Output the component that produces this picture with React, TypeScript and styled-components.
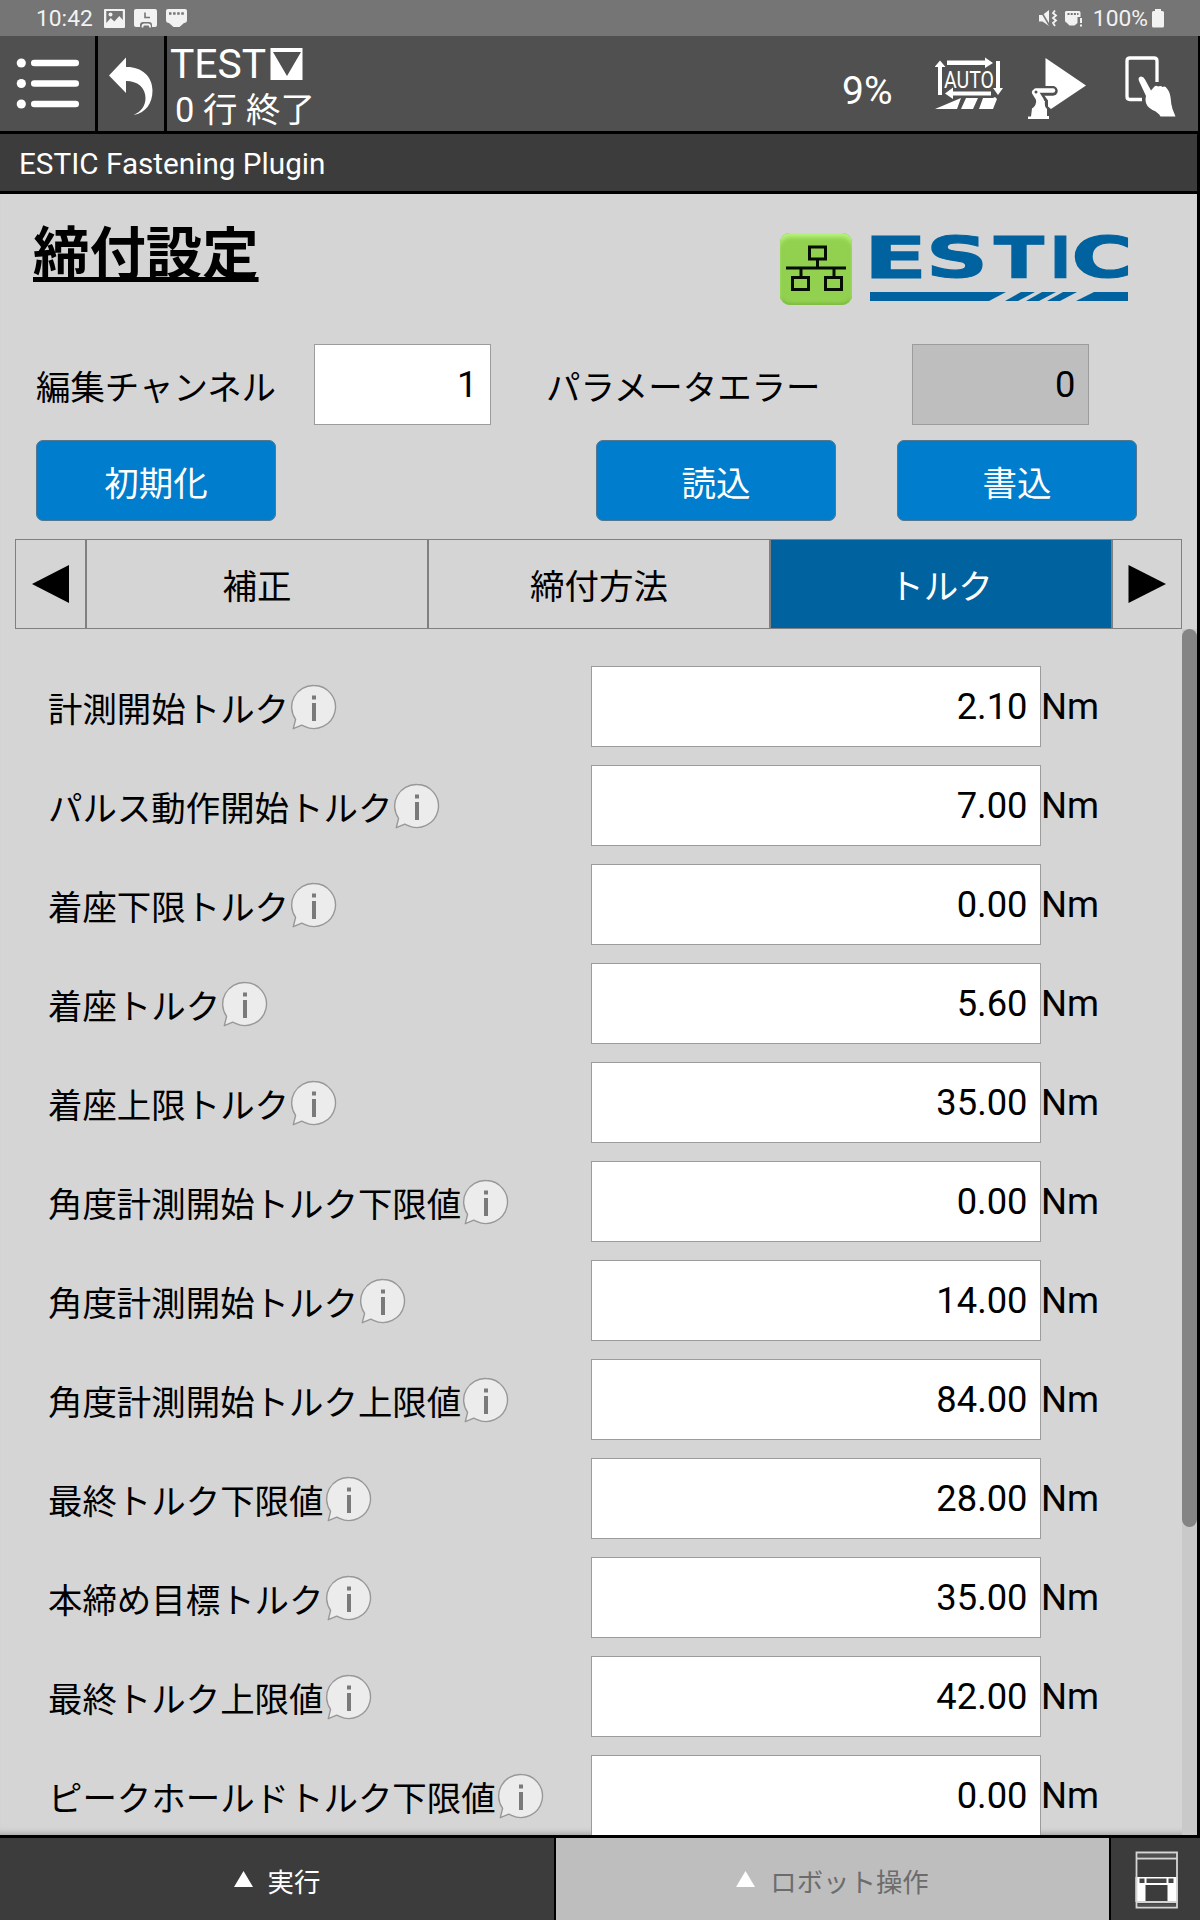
import React from "react";
import styled, { createGlobalStyle } from "styled-components";

const GlobalStyle = createGlobalStyle`
  * { box-sizing: border-box; }
  body { margin: 0; background: #000; }
`;

const roboto = `Roboto, "Noto Sans CJK JP", sans-serif`;
const cjk = `"Noto Sans CJK JP", Roboto, sans-serif`;

const Screen = styled.div`
  width: 1200px;
  height: 1920px;
  overflow: hidden;
  display: flex;
  flex-direction: column;
  background: #000;
  color: #000;
  font-family: ${roboto};
`;

const StatusBar = styled.header`
  height: 36px;
  flex: none;
  display: flex;
  justify-content: space-between;
  align-items: center;
  padding: 2px 36px 0 36px;
  background: #757575;
  color: #f2f2f2;
  font-size: 22.8px;
  line-height: 34px;
`;

const StatusGroup = styled.div<{ $gap: number }>`
  display: flex;
  align-items: center;
  gap: ${(p) => p.$gap}px;
  height: 34px;
  svg { display: block; }
`;

const Battery = styled.span`
  padding-left: 5px;
`;

const Toolbar = styled.div`
  height: 95px;
  flex: none;
  display: flex;
  gap: 3px;
  margin-right: 2px;
  color: #fff;
`;

const ToolCell = styled.div<{ $width?: number }>`
  ${(p) => (p.$width ? `width: ${p.$width}px; flex: none;` : "flex: 1;")}
  display: flex;
  background: #505050;
  svg { display: block; flex: none; }
`;

const Program = styled.div`
  flex: 1;
  padding: 6px 0 0 3px;
`;

const ProgramName = styled.div`
  display: flex;
  align-items: center;
  gap: 4px;
  height: 44px;
  font-size: 40.8px;
  line-height: 44px;
`;

const ProgramState = styled.div`
  height: 44px;
  padding: 1px 0 0 5px;
  font-size: 34.5px;
  line-height: 46px;
`;

const Speed = styled.div`
  width: 93px;
  padding-top: 33px;
  font-size: 39px;
  line-height: 44px;
`;

const PluginBar = styled.div`
  height: 57px;
  flex: none;
  margin: 3px 3px 3px 0;
  padding-left: 19px;
  background: #3b3c3b;
  color: #fff;
  font-size: 29.7px;
  line-height: 59px;
`;

const Content = styled.main`
  height: 1641px;
  flex: none;
  margin-right: 3px;
  display: flex;
  flex-direction: column;
  background: #d5d5d5;
  box-shadow: inset 0 -7px 6px -6px #999;
  overflow: hidden;
  font-family: ${cjk};
`;

const Heading = styled.div`
  height: 150px;
  flex: none;
  display: flex;
  justify-content: space-between;
  align-items: flex-start;
  padding: 0 57px 0 33px;
`;

const Title = styled.h1`
  margin: 15px 0 0;
  font-size: 56.4px;
  line-height: 82px;
  font-weight: 700;
  text-decoration: underline;
  text-decoration-thickness: 5px;
  text-underline-offset: 3px;
  text-decoration-skip-ink: none;
`;

const Brand = styled.div`
  display: flex;
  gap: 10px;
  padding-top: 22px;
  svg { display: block; }
`;

const NetworkBadge = styled.div`
  width: 72px;
  height: 72px;
  margin-top: 17px;
  border-radius: 10px;
  background: #92d050;
  box-shadow: inset 0 4px 4px #b8f57c, inset 0 -2px 3px #7fbd44, inset 2px 0 3px #86c44a, inset -2px 0 3px #86c44a;
`;

const FieldRow = styled.div`
  display: flex;
  align-items: center;
  height: 81px;
  flex: none;
  padding-left: 36px;
`;

const Label = styled.label<{ $width?: number }>`
  ${(p) => (p.$width ? `width: ${p.$width}px;` : "")}
  flex: none;
  font-size: 34.45px;
  line-height: 50px;
  white-space: nowrap;
`;

const ValueBox = styled.div<{ $width: number; $disabled?: boolean; $right?: number }>`
  width: ${(p) => p.$width}px;
  height: 81px;
  flex: none;
  margin-right: ${(p) => p.$right ?? 0}px;
  padding-right: 12.5px;
  border: 1px solid #9c9c9c;
  background: ${(p) => (p.$disabled ? "#bebebe" : "#fff")};
  font-family: ${roboto};
  font-size: 36.3px;
  line-height: 79px;
  text-align: right;
`;

const ButtonRow = styled.div`
  display: flex;
  height: 81px;
  flex: none;
  margin-top: 15px;
  padding-left: 36px;
`;

const Button = styled.button<{ $right?: number }>`
  width: 240px;
  height: 81px;
  padding: 2px 0 0;
  margin-right: ${(p) => p.$right ?? 0}px;
  border: 1px solid #52778f;
  border-radius: 7px;
  background: #007dcc;
  color: #fff;
  font-family: ${cjk};
  font-size: 34.5px;
  line-height: 77px;
`;

const Tabs = styled.nav`
  display: flex;
  height: 90px;
  flex: none;
  width: 1167px;
  margin: 18px 0 0 15px;
`;

const Tab = styled.div<{ $active?: boolean; $width: number }>`
  width: ${(p) => p.$width}px;
  flex: none;
  display: flex;
  align-items: center;
  justify-content: center;
  border: 1px solid #808080;
  background: ${(p) => (p.$active ? "#00629e" : "transparent")};
  color: ${(p) => (p.$active ? "#fff" : "#000")};
  font-size: 34.5px;
  line-height: 50px;
`;

const ScrollArea = styled.div`
  flex: 1;
  min-height: 0;
  display: flex;
`;

const Params = styled.div`
  flex: 1;
  display: flex;
  flex-direction: column;
  gap: 18px;
  padding: 37px 0 0 48px;
  overflow: hidden;
`;

const ParamRow = styled.div`
  display: flex;
  align-items: center;
  height: 81px;
  flex: none;
`;

const ParamName = styled.div`
  width: 543px;
  flex: none;
  display: flex;
  align-items: center;
  gap: 1px;
`;

const Unit = styled.span`
  font-family: ${roboto};
  font-size: 36.5px;
  line-height: 81px;
`;

const Track = styled.div`
  width: 15px;
  background: #c9c9c9;
`;

const Thumb = styled.div`
  height: 898px;
  border-radius: 7.5px;
  background: #848484;
`;

const Footer = styled.footer`
  display: flex;
  gap: 2px;
  height: 82px;
  flex: none;
  margin-top: 3px;
  font-family: ${cjk};
`;

const FooterTab = styled.div<{ $width: number; $muted?: boolean }>`
  width: ${(p) => p.$width}px;
  flex: none;
  display: flex;
  align-items: center;
  justify-content: center;
  gap: 15px;
  padding: 3px 0 0 0;
  background: ${(p) => (p.$muted ? "#bebebe" : "#3c3c3c")};
  color: ${(p) => (p.$muted ? "#6c6c6c" : "#fff")};
  font-size: 26.4px;
  line-height: 40px;
  svg { display: block; margin-top: -3px; }
`;

const InfoIcon = () => (
  <svg width="48" height="48" viewBox="0 0 48 48">
    <path
      d="M24 2.500a21.500 21.500 0 1 1-9.500 40.800l-2.700-1.200-8.500 3.600 2.300-9.300A21.500 21.500 0 0 1 24 2.500Z"
      fill="#ececec" stroke="#989898" strokeWidth="1.400" strokeLinejoin="round"
    />
    <path d="M22 12.500h4v4h-4zM22 20h4v18h-4z" fill="#7a7a7a" />
  </svg>
);

const params: [string, string][] = [
  ["計測開始トルク", "2.10"],
  ["パルス動作開始トルク", "7.00"],
  ["着座下限トルク", "0.00"],
  ["着座トルク", "5.60"],
  ["着座上限トルク", "35.00"],
  ["角度計測開始トルク下限値", "0.00"],
  ["角度計測開始トルク", "14.00"],
  ["角度計測開始トルク上限値", "84.00"],
  ["最終トルク下限値", "28.00"],
  ["本締め目標トルク", "35.00"],
  ["最終トルク上限値", "42.00"],
  ["ピークホールドトルク下限値", "0.00"],
];

const StatusLeftIcons = () => (
  <svg width="84" height="20" viewBox="104 9 84 20" fill="#f2f2f2">
    <path fillRule="evenodd" d="M105 9h19q1 0 1 1v17q0 1-1 1h-19q-1 0-1-1V10q0-1 1-1Zm1.300 2v12l4.500-5 3.500 3.500 5-5.500 3.500 4V11Z" />
    <circle cx="110.500" cy="14.500" r="2" />
    <path d="M136 9h19q2 0 2 2v14q0 2-2 2h-3v-2q0-3-3-3h-6q-3 0-3 3v2h-4q-2 0-2-2V11q0-2 2-2Z" />
    <path d="M145 12.500v5h5" fill="none" stroke="#757575" strokeWidth="1.600" />
    <path d="M142.500 27.500v-1q0-2 2-2h3.500q2 0 2 2v1" fill="none" stroke="#f2f2f2" strokeWidth="1.800" />
    <path d="M168 9h17q2 0 2 2v9q0 3-3 3l-4.500 4h-6L169 23q-3 0-3-3v-9q0-2 2-2Z" />
    <path d="M169 13.500h15" stroke="#757575" strokeWidth="2.500" strokeDasharray="2.500 1.600" />
  </svg>
);

const StatusRightIcons = () => (
  <svg width="46" height="20" viewBox="1038 8 46 20" fill="#f2f2f2">
    <path d="M1039 14h3.500l6.500-5v16l-6.500-4.500H1039Z" />
    <path d="M1040 8.500l10 17" stroke="#757575" strokeWidth="1.500" />
    <path d="M1055 9.500l-2 2.500 3 2.500-3 2.500 3 2.500-3 2.500 2 3" fill="none" stroke="#f2f2f2" strokeWidth="1.800" />
    <path d="M1066 10h13q1.500 0 1.500 1.500V16h-3v6l-3 2.500h-5l-3-3q-1.500 0-1.500-2v-8q0-1.500 1-1.500Z" />
    <path d="M1067.500 13h11" stroke="#757575" strokeWidth="1.800" strokeDasharray="2 1.200" />
    <path d="M1080 17h2v5h-2zM1080 23.500h2v2h-2z" />
  </svg>
);

const ToolbarIcons = () => (
  <svg width="263" height="95" viewBox="935 36 263 95" fill="#fff">
    <path d="M947 60.500h38v-3l8 5.500-8 5v-3h-38ZM938 95V67h-3.500l5.500-6.500 5.500 6.500h-3.500v28ZM996 61h4v27h3l-5 7-5-7h3ZM991 95.500h-38V99l-8-5.500 8-6v4h38Z" />
    <text x="944" y="87.500" fontFamily="Roboto, sans-serif" fontSize="24" textLength="50" lengthAdjust="spacingAndGlyphs">AUTO</text>
    <path d="M935 109l26-11-4 11ZM966 98h12l-5 11h-12ZM983 98h10l2-1 2 2-4 10h-14Z" />
    <path d="M1045.500 58 1086 85.500 1051 109l-3-2.500v-6l-4-5.500 9-1q4-1 4-4t-4-4h-7.500Z" />
    <path d="M1036 91h17" stroke="#505050" strokeWidth="9.500" strokeLinecap="round" />
    <path d="M1036 90.500h17" stroke="#fff" strokeWidth="4.500" strokeLinecap="round" />
    <path d="M1035.500 92.500l5 8" stroke="#fff" strokeWidth="7" strokeLinecap="round" />
    <circle cx="1036" cy="92" r="1.500" fill="#505050" />
    <path d="M1036 98.500l9 2.500q-1 5 2 8v7h2v3h-21v-2.500h3l1-8q5-3 4-10Z" />
    <path d="M1142 99.500h-12q-3 0-3-3V61q0-3 3-3h24q3 0 3 3v21" fill="none" stroke="#fff" strokeWidth="3.300" />
    <path d="M1139 81q-1.500-4 2-4.500 2.500 0 4 3l6 11 3-3.500q2-2 4-.5 3-1 4.500.5 3-1.500 4 1 3 3 4 9 .5 7 2 12l3 7.500h-15q-2-4-8-6.500-7-4-7-10 0-2 .500-4Z" />
  </svg>
);

export default function App() {
  return (
    <>
      <GlobalStyle />
      <Screen>
        <StatusBar>
          <StatusGroup $gap={11}>
            <span>10:42</span>
            <StatusLeftIcons />
          </StatusGroup>
          <StatusGroup $gap={4}>
            <StatusRightIcons />
            <Battery>100%</Battery>
            <svg width="12" height="22" viewBox="0 0 12 22">
              <path d="M3 1h6v2h1.500q1.500 0 1.500 1.500V18q0 1.500-1.500 1.500h-9Q0 19.500 0 18V4.500Q0 3 1.500 3H3Z" fill="#f2f2f2" />
            </svg>
          </StatusGroup>
        </StatusBar>

        <Toolbar>
          <ToolCell $width={95}>
            <svg width="95" height="95" viewBox="0 36 95 95" fill="#fff">
              {[63, 83.5, 104].map((y) => (
                <g key={y}>
                  <circle cx="21.300" cy={y} r="4.600" />
                  <rect x="31" y={y - 3.3} width="48" height="6.600" rx="3.300" />
                </g>
              ))}
            </svg>
          </ToolCell>
          <ToolCell $width={66}>
            <svg width="66" height="95" viewBox="98 36 66 95">
              <path d="M109 75.500 126 57.500v9.500c15-.5 26.500 9 26.500 23.500 0 13-7 22.500-19 24.500 8-3.500 12-9.500 12-17 0-10.500-8-17-19.500-17v12Z" fill="#fff" />
            </svg>
          </ToolCell>
          <ToolCell>
            <Program>
              <ProgramName>
                <span>TEST</span>
                <svg width="33" height="32" viewBox="0 0 33 32">
                  <path fillRule="evenodd" d="M.500 0h32v32h-32ZM3 4l14 24L31 4Z" fill="#fff" />
                </svg>
              </ProgramName>
              <ProgramState>0 行 終了</ProgramState>
            </Program>
            <Speed>9%</Speed>
            <ToolbarIcons />
          </ToolCell>
        </Toolbar>

        <PluginBar>ESTIC Fastening Plugin</PluginBar>

        <Content>
          <Heading>
            <Title>締付設定</Title>
            <Brand>
              <NetworkBadge>
                <svg width="72" height="72" viewBox="0 0 72 72" fill="none" stroke="#050c00" strokeWidth="3">
                  <path d="M29.500 14h16v12h-16ZM12.500 44.500h16v12h-16ZM45.500 44.500h16v12h-16ZM37.500 26v9M6 35h60M21 35v9M54 35v9" />
                </svg>
              </NetworkBadge>
              <svg width="278" height="92" viewBox="862 216 278 92" fill="#00629e">
                <text y="278" fontFamily="DejaVu Sans, sans-serif" fontWeight="700" fontSize="56.500" stroke="#00629e" strokeWidth="1.200">
                  <tspan x="864" textLength="63" lengthAdjust="spacingAndGlyphs">E</tspan>
                  <tspan x="926" textLength="62" lengthAdjust="spacingAndGlyphs">S</tspan>
                  <tspan x="994" textLength="50" lengthAdjust="spacingAndGlyphs">T</tspan>
                  <tspan x="1050" textLength="21" lengthAdjust="spacingAndGlyphs">I</tspan>
                  <tspan x="1071.500" textLength="61" lengthAdjust="spacingAndGlyphs">C</tspan>
                </text>
                <path d="M870 292h136l-17 9H870ZM1021 292h14l-17 9h-13ZM1042 292h14l-17 9h-13ZM1063 292h14l-17 9h-13ZM1094 292h34v9h-52Z" />
              </svg>
            </Brand>
          </Heading>

          <FieldRow>
            <Label $width={278}>編集チャンネル</Label>
            <ValueBox $width={177} $right={55}>1</ValueBox>
            <Label $width={366}>パラメータエラー</Label>
            <ValueBox $width={177} $disabled>0</ValueBox>
          </FieldRow>

          <ButtonRow>
            <Button $right={320}>初期化</Button>
            <Button $right={61}>読込</Button>
            <Button>書込</Button>
          </ButtonRow>

          <Tabs>
            <Tab $width={71}>
              <svg width="38" height="38" viewBox="0 0 38 38"><path d="M0 19 37 0v38Z" /></svg>
            </Tab>
            <Tab $width={342}>補正</Tab>
            <Tab $width={342}>締付方法</Tab>
            <Tab $width={342} $active>トルク</Tab>
            <Tab $width={70}>
              <svg width="38" height="38" viewBox="0 0 38 38"><path d="M38 19 .500 0v38Z" /></svg>
            </Tab>
          </Tabs>

          <ScrollArea>
            <Params>
              {params.map(([name, value]) => (
                <ParamRow key={name}>
                  <ParamName>
                    <Label>{name}</Label>
                    <InfoIcon />
                  </ParamName>
                  <ValueBox $width={450}>{value}</ValueBox>
                  <Unit>Nm</Unit>
                </ParamRow>
              ))}
            </Params>
            <Track>
              <Thumb />
            </Track>
          </ScrollArea>
        </Content>

        <Footer>
          <FooterTab $width={554}>
            <svg width="19" height="16" viewBox="0 0 19 16"><path d="M9.500 0 19 16H0Z" fill="#fff" /></svg>
            実行
          </FooterTab>
          <FooterTab $width={553} $muted>
            <svg width="19" height="16" viewBox="0 0 19 16"><path d="M9.500 0 19 16H0Z" fill="#fff" /></svg>
            ロボット操作
          </FooterTab>
          <FooterTab $width={89}>
            <svg width="44" height="60" viewBox="1133.500 1849 44 60">
              <path d="M1135 1877h42v25h-10v-17h-22v17h-10Z" fill="#fff" />
              <path d="M1139 1878.500h5v4.500h-5zM1168 1878.500h5v4.500h-5zM1146 1878.500h20v4.500h-20z" fill="#444" />
              <path d="M1136 1852.500h40.500v55H1136ZM1136 1858.500h40M1136 1902h40" fill="none" stroke="#d4d4d4" strokeWidth="1.800" />
              <path d="M1137.500 1854h37.500v3.200h-37.500zM1137.500 1903.500h37.500v3h-37.500z" fill="#505050" />
            </svg>
          </FooterTab>
        </Footer>
      </Screen>
    </>
  );
}
